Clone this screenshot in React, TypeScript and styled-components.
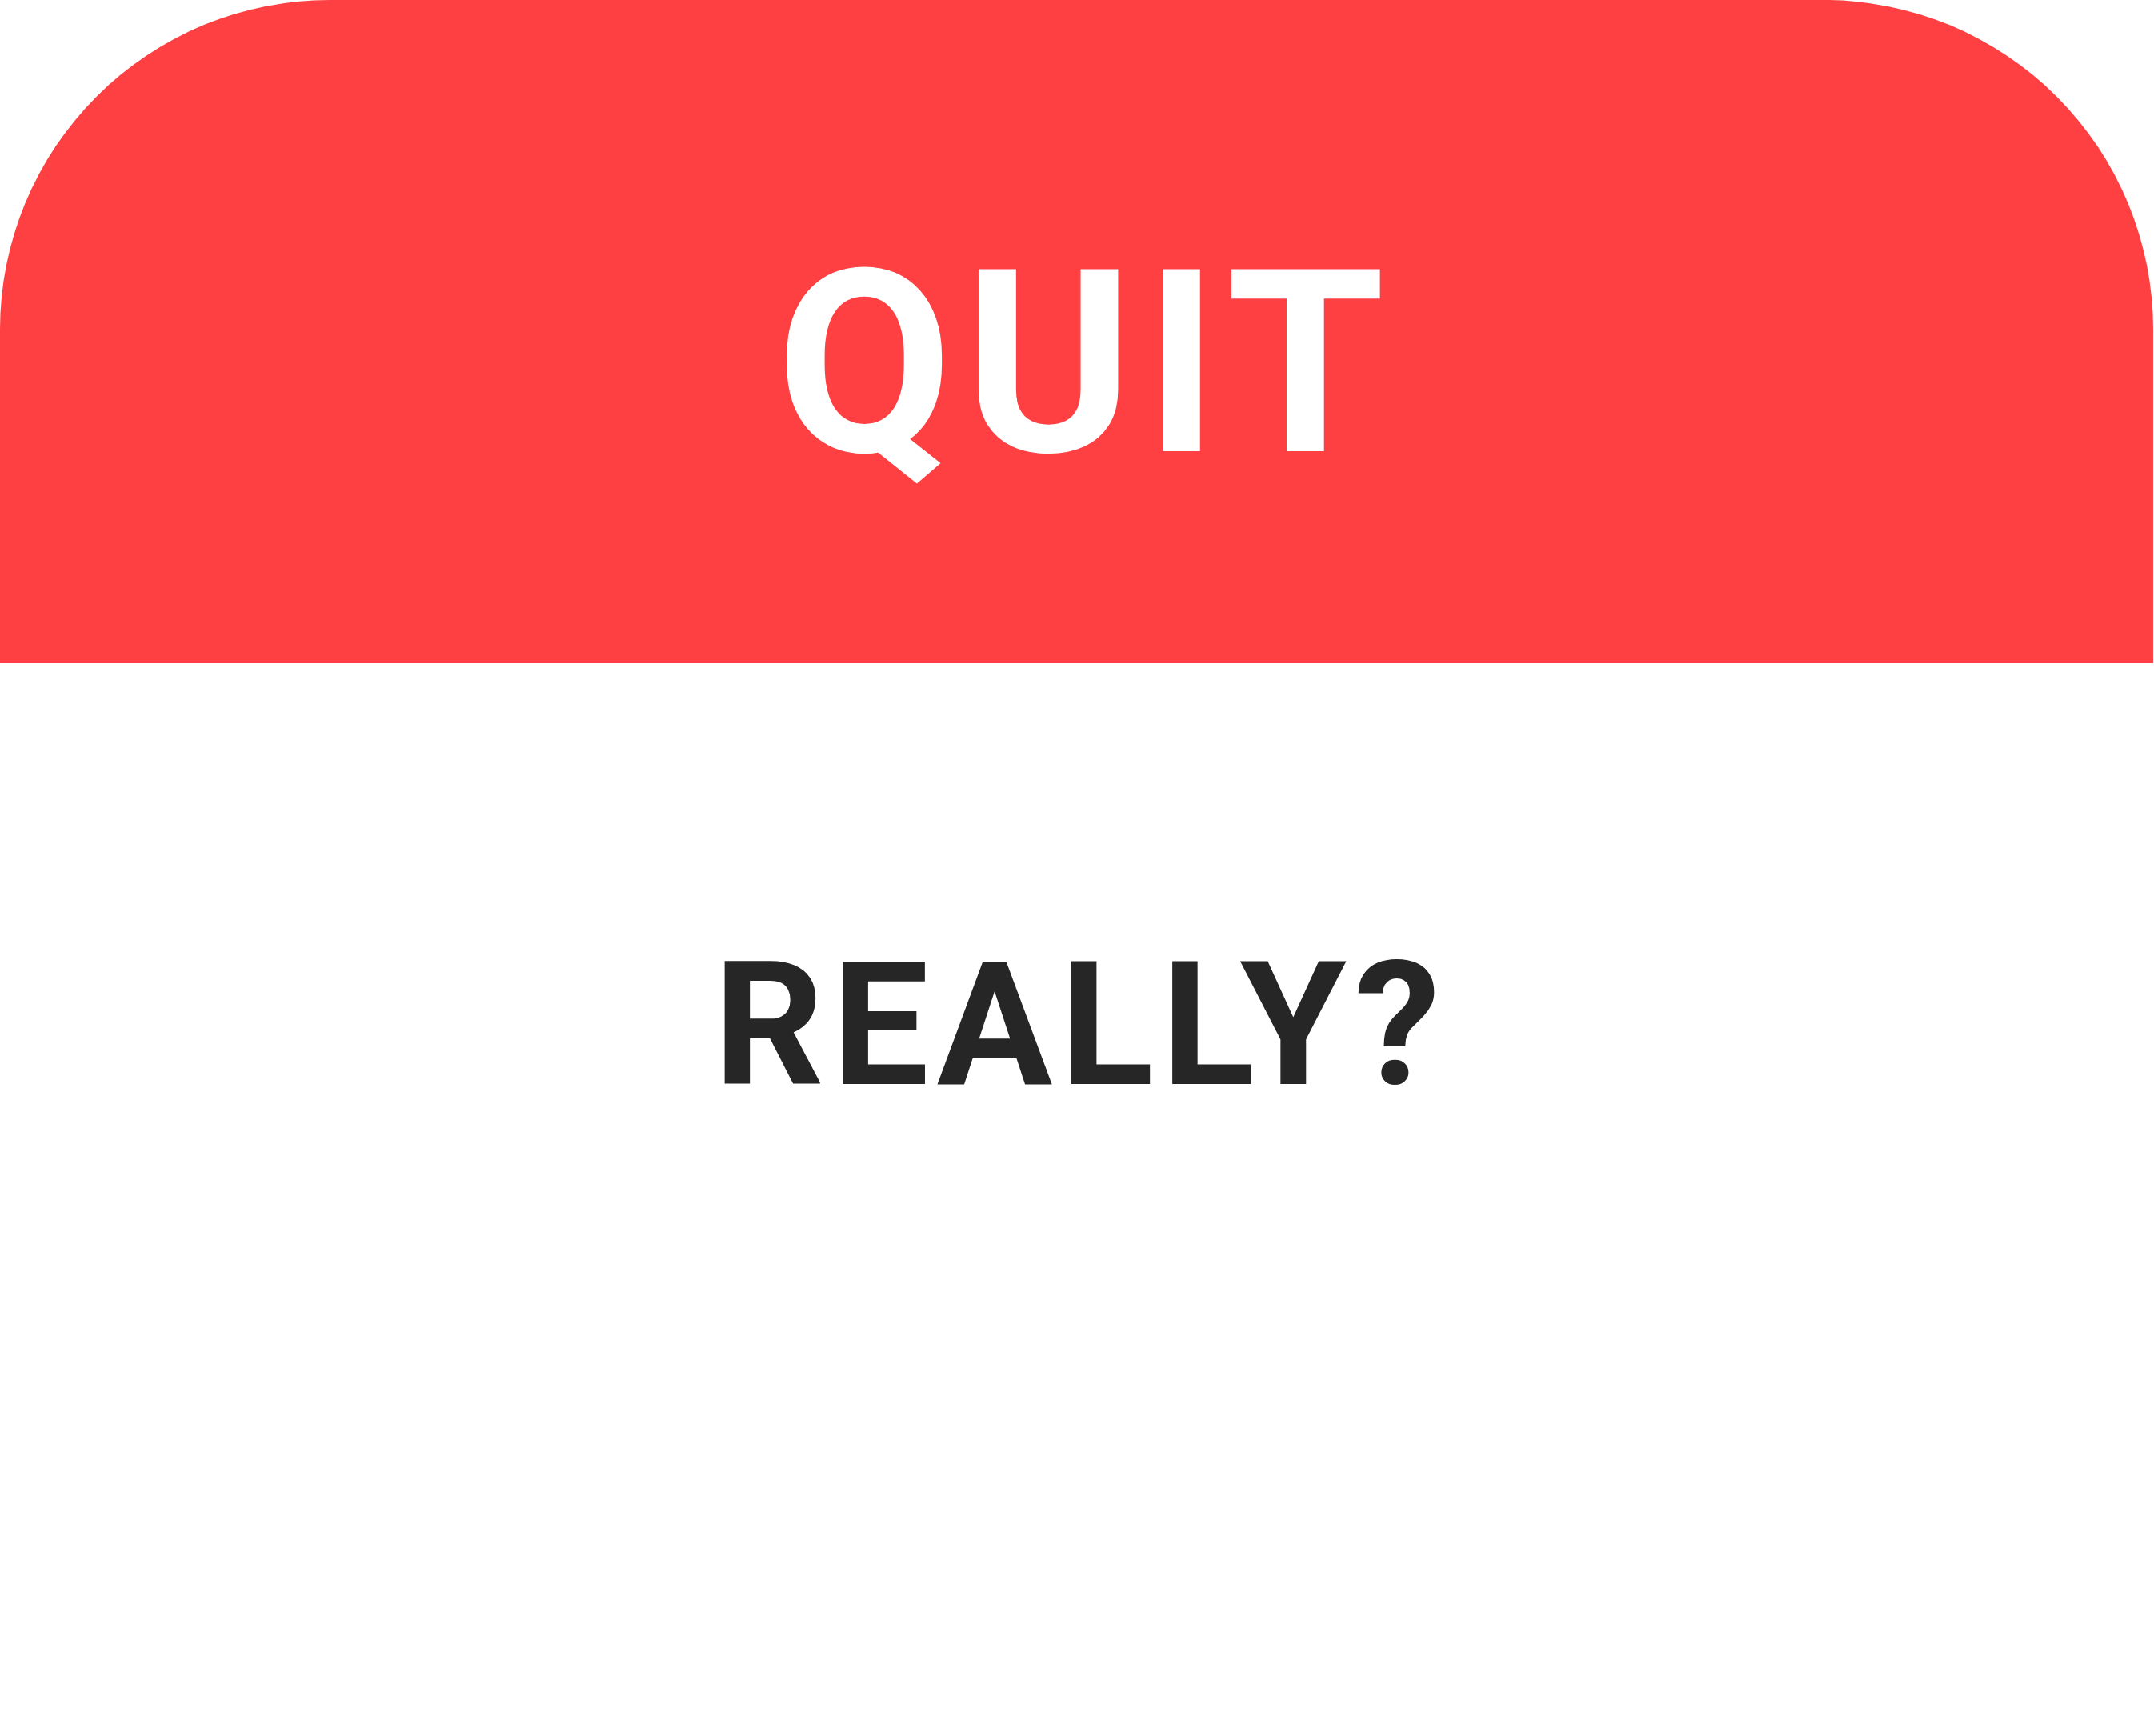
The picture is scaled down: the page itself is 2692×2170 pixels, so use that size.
import React from "react";
import styled, { createGlobalStyle } from "styled-components";

const Global = createGlobalStyle`
  html, body {
    margin: 0;
    padding: 0;
    background: #ffffff;
  }
  body {
    font-family: Roboto, "Liberation Sans", sans-serif;
  }
`;

const Screen = styled.div`
  width: 2692px;
  height: 2170px;
  display: flex;
  flex-direction: column;
  background: #ffffff;
  overflow: hidden;
`;

const Header = styled.header`
  width: 2691px;
  height: 829px;
  box-sizing: border-box;
  padding-top: 80px;
  background: #ff4042;
  border-radius: 412px 412px 0 0;
  display: flex;
  align-items: center;
  justify-content: center;
`;

const Title = styled.h1`
  margin: 0;
  padding-left: 24px;
  font-family: Roboto, "Liberation Sans", sans-serif;
  font-weight: 700;
  font-size: 320px;
  line-height: 1;
  letter-spacing: 14px;
  color: #ffffff;
`;

const Body = styled.main`
  flex: 1;
  display: flex;
  justify-content: center;
  align-items: flex-start;
  padding-top: 345px;
`;

const Question = styled.p`
  margin: 0;
  padding-left: 10px;
  font-family: Roboto, "Liberation Sans", sans-serif;
  font-weight: 700;
  font-size: 215px;
  line-height: 1;
  letter-spacing: 10px;
  color: #262626;
`;

export default function App() {
  return (
    <>
      <Global />
      <Screen>
        <Header>
          <Title>QUIT</Title>
        </Header>
        <Body>
          <Question>REALLY?</Question>
        </Body>
      </Screen>
    </>
  );
}
